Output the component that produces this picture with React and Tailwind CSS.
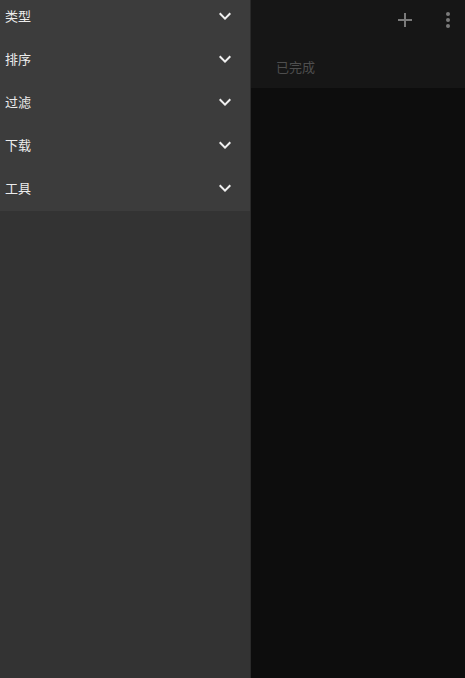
const rows = ["类型", "排序", "过滤", "下载", "工具"];

function ChevronDown() {
  return (
    <svg width="24" height="24" viewBox="0 0 24 24" fill="#f0f0f0">
      <path d="M16.59 8.59L12 13.17 7.41 8.59 6 10l6 6 6-6z" />
    </svg>
  );
}

function PlusIcon() {
  return (
    <svg width="24" height="24" viewBox="0 0 24 24" fill="#7a7a7a">
      <path d="M19 13h-6v6h-2v-6H5v-2h6V5h2v6h6v2z" />
    </svg>
  );
}

function MoreIcon() {
  return (
    <svg width="24" height="24" viewBox="0 0 24 24" fill="#7a7a7a">
      <circle cx="12" cy="6" r="2" />
      <circle cx="12" cy="12" r="2" />
      <circle cx="12" cy="18" r="2" />
    </svg>
  );
}

export default function App() {
  return (
    <div
      className="flex h-[678px] w-[465px] overflow-hidden bg-[#0d0d0d]"
      style={{ fontFamily: '"Noto Sans CJK SC", "Noto Sans", sans-serif' }}
    >
      {/* Drawer */}
      <div className="flex w-[250px] shrink-0 flex-col bg-[#333333]">
        <div className="bg-[#3c3c3c] pb-[2px]">
          <div className="-mt-[6px]">
            {rows.map((r) => (
              <div key={r} className="flex h-[43px] items-center justify-between pl-[5px] pr-[13px]">
                <span className="text-[13px] text-[#ececec]">{r}</span>
                <ChevronDown />
              </div>
            ))}
          </div>
        </div>
      </div>
      <div className="w-[1px] shrink-0 bg-[#2a2a2a]" />

      {/* Main */}
      <div className="flex flex-1 flex-col">
        <div className="h-[88px] bg-[#161616]">
          <div className="flex h-[40px] items-center justify-end">
            <div className="mr-[19px]">
              <PlusIcon />
            </div>
            <div className="mr-[5px]">
              <MoreIcon />
            </div>
          </div>
          <div className="flex h-[48px] items-center pl-[25px] pt-[6px]">
            <span className="text-[13px] text-[#4e4e4e]">已完成</span>
          </div>
        </div>
      </div>
    </div>
  );
}
